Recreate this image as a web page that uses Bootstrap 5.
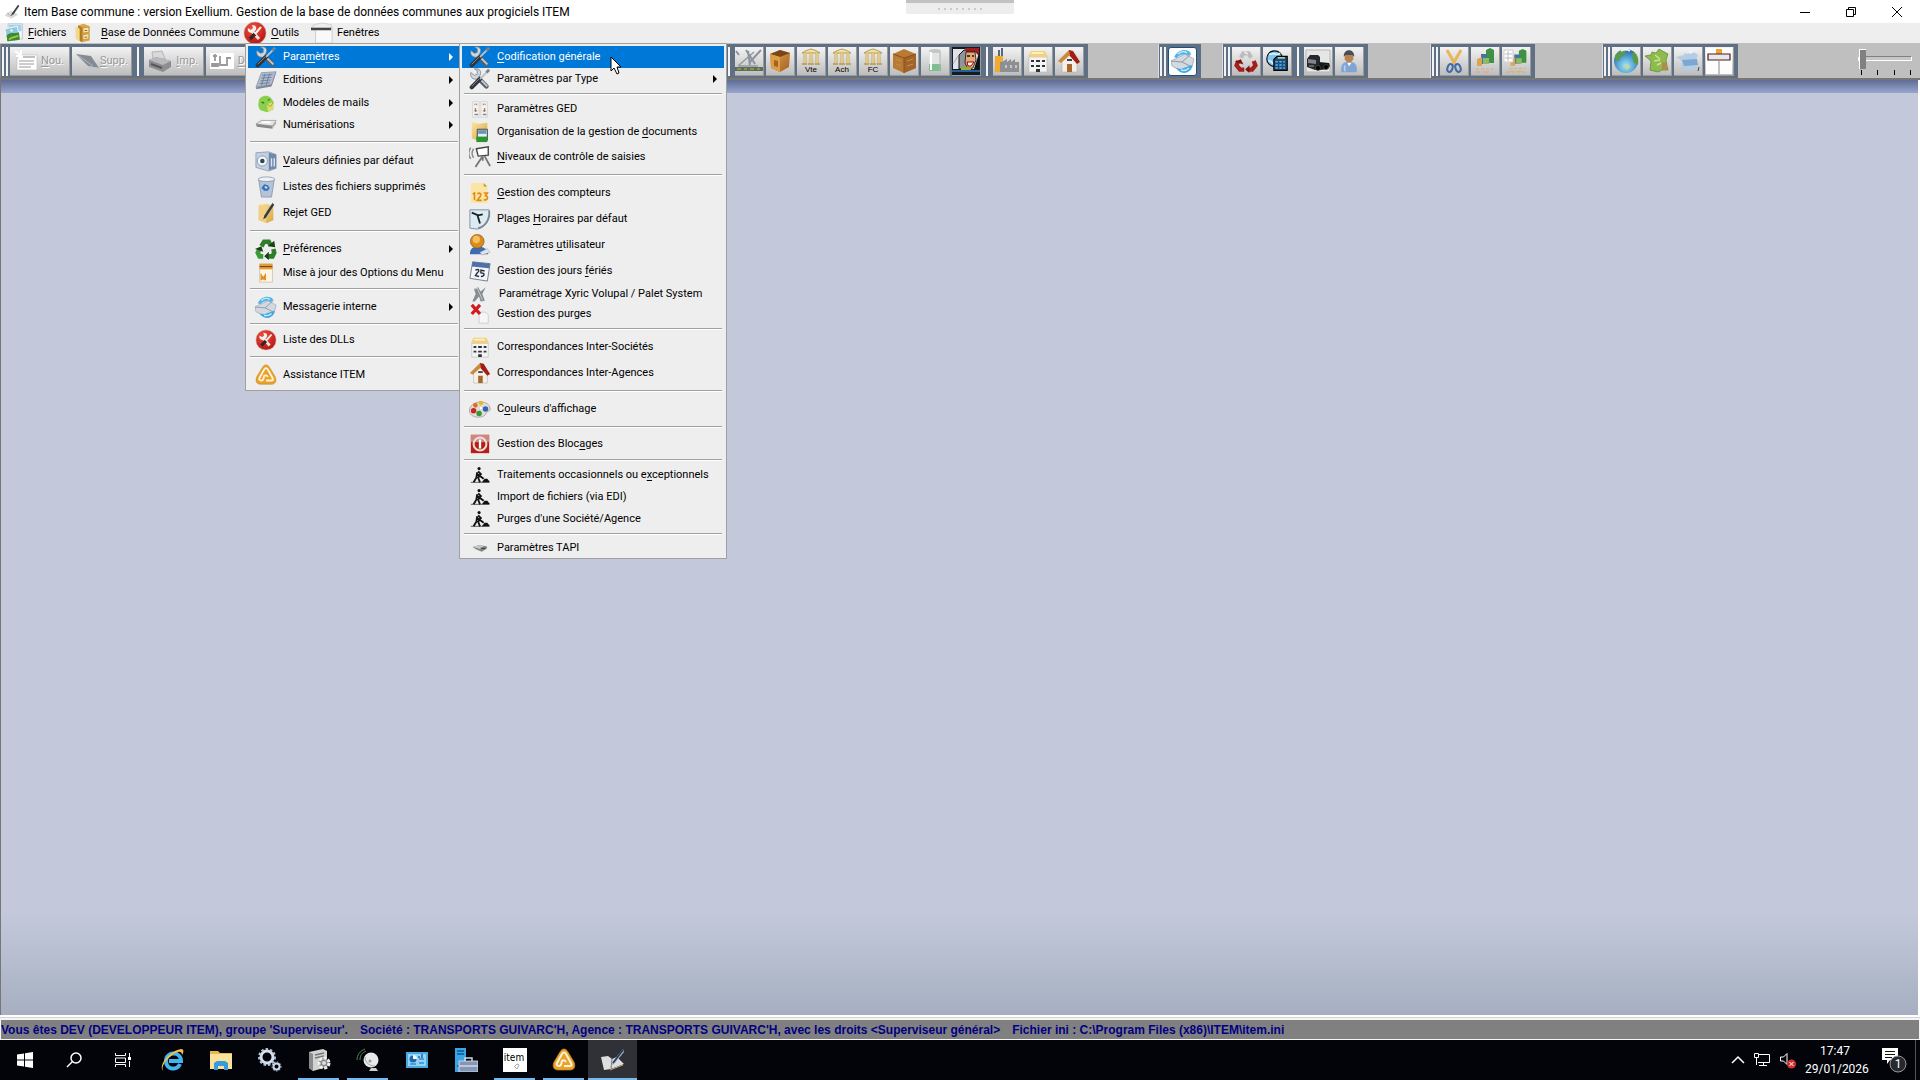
<!DOCTYPE html>
<html lang="fr">
<head>
<meta charset="utf-8">
<meta name="viewport" content="width=device-width, initial-scale=1">
<title>Item Base commune</title>
<link href="https://cdn.jsdelivr.net/npm/bootstrap@5.3.0/dist/css/bootstrap.min.css" rel="stylesheet">
<style>
  body { font-family: Roboto, "Noto Sans", sans-serif; font-size: 11px; line-height: 16px; color: #000; background: #fff; overflow: hidden; }
  svg { display: block; flex: none; }
  u { text-underline-offset: 2px; }
  .i16 { width: 16px; height: 16px; }
  .i20 { width: 20px; height: 20px; }
  .i22 { width: 22px; height: 22px; }
  .i24 { width: 24px; height: 24px; }
  .i28 { width: 28px; height: 28px; }

  .titlebar { height: 23px; }
  .titlebar h1 { font-size: 12px; line-height: 16px; font-weight: 400; }
  .win-btn { width: 46px; height: 20px; padding: 0; border: 0; background: none; display: flex; align-items: center; justify-content: center; }
  .pull-tab { position: absolute; left: 47.2%; top: 0; width: 108px; height: 14px; background: #ededed; border-top: 3px solid #c2c2c2; display: flex; justify-content: center; align-items: center; gap: 4px; }
  .pull-tab i { width: 2px; height: 2px; background: #ccc; }

  .menubar { height: 20px; background: #eee; }
  .menu-link { height: 20px; color: #000; text-decoration: none; display: flex; align-items: center; white-space: nowrap; }
  .menu-link:hover { color: #000; }
  .slot-files { width: 69px; }
  .slot-base { width: 174px; }
  .slot-tools { width: 64px; }

  .menu-pane { --bs-dropdown-min-width: 0; display: block; position: absolute; padding: 2px; border: 1px solid #a0a0a0; border-radius: 0; background: #eee; color: #000; font-size: 11px; margin: 0; z-index: 20; }
  .pane-main { top: 20px; left: 2px; width: 216px; padding-right: 0; }
  .pane-sub { top: -1px; left: 213px; width: 268px; padding-bottom: 0; }
  .menu-row { display: flex; align-items: center; width: 100%; height: 26px; padding: 0 7px 0 7px; border: 0; background: none; color: #000; text-align: left; white-space: nowrap; line-height: 16px; }
  .menu-row svg { margin-right: 6px; }
  .h-20 { height: 20px; }
  .h-22 { height: 22px; }
  .h-24 { height: 24px; }
  .picked, .picked:hover { background: #0078d7; color: #fff; }
  .has-sub::after { content: ""; margin-left: auto; border: 4px solid transparent; border-left-color: currentColor; border-right: 0; }
  .rule { height: 10px; display: flex; align-items: center; padding: 0 2px; }
  .rule::before { content: ""; flex: 1; height: 2px; background: #a0a0a0; border-bottom: 1px solid #fff; }
  .rule-12 { height: 12px; }
  .rule-8 { height: 8px; }

  .toolbar { height: 37px; background: #bfbfbf; border-bottom: 2px solid #777; padding-top: 1px; }
  .toolgroup { height: 34px; background: #5f7084; display: flex; align-items: center; gap: 2px; padding: 0 4px 0 1px; flex: none; border-left: 1px solid #dcdcdc; }
  .grip { width: 6px; height: 29px; border: solid #f4f4f4; border-width: 0 2px; flex: none; }
  .grip-one { width: 2px; height: 29px; background: #f4f4f4; margin: 0 3px; flex: none; }
  .tool { width: 29px; height: 29px; padding: 0; border: 0; border-right: 1px solid #9a9a9a; border-bottom: 1px solid #9a9a9a; background: linear-gradient(#f3f3f3, #bdbdbd); display: flex; align-items: center; justify-content: center; flex: none; }
  .tool-wide { width: 60px; padding: 0 5px 0 4px; justify-content: space-between; color: #989898; text-shadow: 1px 1px 0 #fff; font-size: 11px; }
  .tool-set { border: 1px solid #1d4f80; border-radius: 3px; background: #fdfdfd; }
  .group-long { width: 727px; border-left: 1px solid #888; }
  .group-tail { border-left: 0; }
  .gap-s { margin-left: 21px; }
  .gap-m { margin-left: 62px; }
  .gap-l { margin-left: 67px; }
  .gap-xl { margin-left: 70px; }

  .zoomer { width: 54px; padding-top: 4px; }
  .zoomer input { appearance: none; -webkit-appearance: none; display: block; width: 54px; height: 20px; margin: 0; background: none; }
  .zoomer input::-webkit-slider-runnable-track { height: 5px; background: #c6c6c6; border: 1px solid #fff; border-top-color: #808080; }
  .zoomer input::-webkit-slider-thumb { -webkit-appearance: none; width: 7px; height: 20px; margin-top: -8px; background: #808080; border-left: 1px solid #fff; border-top: 1px solid #fff; }
  .ticks { display: flex; justify-content: space-between; padding: 2px 1px 0 3px; }
  .ticks i { width: 1px; height: 5px; background: #000; }

  .workspace { border-left: 1px solid #777; border-right: 2px solid #fff; background: linear-gradient(#5f6b92, #98a6cd) top / 100% 13px no-repeat, linear-gradient(#c3c9da 89%, #a8b2c3 99%, #a9acc1); }
  .statusbar { margin-top: 2px; height: 23px; border-top: 1px solid #d4d4d4; background: #f4f4f4; padding: 2px 1px 1px; }
  .status-text { height: 19px; display: flex; gap: 12px; background: #808080; color: #000080; font: bold 12px/20px "Liberation Sans", Arial, sans-serif; white-space: nowrap; overflow: hidden; }

  .taskbar { height: 40px; background: #02040a; color: #fff; }
  .task { width: 49px; height: 40px; padding: 0; border: 0; background: none; display: flex; align-items: center; justify-content: center; position: relative; }
  .running::after { content: ""; position: absolute; left: 4px; right: 4px; bottom: 0; height: 2px; background: #76b9ed; }
  .focused { background: #303137; }
  .focused::after { left: 0; right: 0; }
  .tray { font-size: 12px; line-height: 18px; }
  .clock { width: 60px; }
  .tray-btn { padding: 0; border: 0; background: none; }
  .peek { width: 5px; height: 40px; border-left: 1px solid #555; }
  .pointer { position: absolute; left: 150px; top: 12px; z-index: 30; }
</style>
<script src="https://cdn.jsdelivr.net/npm/bootstrap@5.3.0/dist/js/bootstrap.bundle.min.js"></script>
</head>
<body class="vh-100 d-flex flex-column">

<svg width="0" height="0" class="position-absolute" aria-hidden="true">
  <defs>
    <linearGradient id="gFolder" x1="0" y1="0" x2="1" y2="1"><stop offset="0" stop-color="#fbe6a0"/><stop offset="1" stop-color="#d9a441"/></linearGradient>
    <radialGradient id="gRed" cx=".4" cy=".3" r=".8"><stop offset="0" stop-color="#f0503c"/><stop offset="1" stop-color="#b01010"/></radialGradient>
    <radialGradient id="gGlobe" cx=".5" cy=".7" r=".7"><stop offset="0" stop-color="#9be8fb"/><stop offset="1" stop-color="#1c62b0"/></radialGradient>
    <linearGradient id="gWood" x1="0" y1="0" x2="1" y2="1"><stop offset="0" stop-color="#e0a35a"/><stop offset="1" stop-color="#a3621d"/></linearGradient>

    <symbol id="tools" viewBox="0 0 24 24">
      <path d="M9 10l10 10" stroke="#5b6068" stroke-width="5" stroke-linecap="round"/>
      <path d="M8 8l12 12" stroke="#c3c9cf" stroke-width="2"/>
      <path d="M2 5l4 3 3-1 0-4-3-2c6-1 8 3 6 7l-3 4C4 13 1 10 2 5z" fill="#cfd6dd" stroke="#737b85" stroke-width=".8"/>
      <path d="M3 21l9-9" stroke="#30343a" stroke-width="4.500" stroke-linecap="round"/>
      <path d="M12 12l8-8" stroke="#b9c0c9" stroke-width="2"/><path d="M3 20l8-8" stroke="#878e98" stroke-width="1"/>
      <path d="M19 5l3-3" stroke="#7a828c" stroke-width="3"/>
    </symbol>
    <symbol id="redtools" viewBox="0 0 24 24"><circle cx="12" cy="12" r="11" fill="url(#gRed)" stroke="#d9a39c" stroke-width=".6"/><path d="M8 9l8 9" stroke="#e9e2df" stroke-width="3"/><path d="M5 7l3 2 2-2-1-3c5 0 5 4 3 6l-3 2c-3 0-5-2-4-5z" fill="#f2efec"/><path d="M7 18l5-5" stroke="#3c2220" stroke-width="3.500"/><path d="M12 13l6-7" stroke="#f7f2ee" stroke-width="2"/></symbol>
    <symbol id="photo" viewBox="0 0 24 24"><path d="M5 1h17v18H5z" fill="#f7fbff" stroke="#9aa" stroke-width=".7"/><path d="M6 2h15v8H6z" fill="#9fd3f0"/><path d="M1 7l15-3 3 17-15 2z" fill="#8cc8e8" stroke="#fff"/><path d="M3 15c5-5 9-2 15-4l1 9-15 2z" fill="#3f8a2a"/><path d="M6 20c4-4 7-2 11-5" stroke="#9bcf4a" stroke-width="2" fill="none"/><circle cx="9" cy="9" r="1.500" fill="#fff7b0"/></symbol>
    <symbol id="cabinet" viewBox="0 0 24 24"><path d="M6 3l7-2 7 3v17l-9 2-5-3z" fill="#d7a94f"/><path d="M6 3l5 2v18l-5-3z" fill="#b27c25"/><path d="M12 6l7-1v6l-7 1zM12 14l7-1v6l-7 1z" fill="#fae3a5" stroke="#a6761f" stroke-width=".6"/><path d="M14 9h3M14 17h3" stroke="#7a4d0c"/><path d="M3 4l5 3v15l-5-3z" fill="#f5d88c"/></symbol>
    <symbol id="window" viewBox="0 0 24 24"><path d="M2 6h21v17H5V10z" fill="#f9f9f9" stroke="#c9c9c9"/><path d="M0 6h22v3H0z" fill="#444"/><path d="M3 3l9-2 10 2v3H1z" fill="#eee" stroke="#bbb" stroke-width=".6"/></symbol>
    <symbol id="pen" viewBox="0 0 24 24"><path d="M2 17l8-6 10 5-9 5z" fill="#dfe0e2" stroke="#aaa" stroke-width=".6"/><path d="M21 1l2 2-9 13-4 2 2-4z" fill="#3a3f48"/><path d="M5 13l3 4M9 18l5-3" stroke="#888"/></symbol>
    <symbol id="sheet" viewBox="0 0 24 24"><path d="M7 6l16-2-5 15-17 3z" fill="#7e8898"/><path d="M7 4l16-1-5 14-17 3z" fill="#b0bccd" stroke="#78869a" stroke-width=".7"/><path d="M8 7l11-1M7 10l11-1M6 13l11-1M5 16l11-1M11 5l-4 13M16 5l-4 13" stroke="#667a99" stroke-width=".9"/></symbol>
    <symbol id="greenmail" viewBox="0 0 24 24"><path d="M4 11c0-6 8-9 13-5l3 4v9l-7 3-7-2c-2-2-3-5-2-9z" fill="#8bd04a"/><path d="M13 13l7-2v8l-6 2z" fill="#e0dd70"/><path d="M13 13l4 3 3-5" stroke="#9aa638" fill="none"/><path d="M7 11l3 1M14 9l2-1" stroke="#3f7b1c" stroke-width="1.500"/></symbol>
    <symbol id="scanner" viewBox="0 0 24 24"><path d="M1 11l6-4h16l-4 6z" fill="#e6e6e6" stroke="#888" stroke-width=".7"/><path d="M1 11l18 2v3L2 14z" fill="#888"/><path d="M19 13l4-5v2l-4 6z" fill="#aaa"/><path d="M8 9h9" stroke="#fff" stroke-width="2"/></symbol>
    <symbol id="camera" viewBox="0 0 24 24"><path d="M1 3l14-1 8 3v15l-8 3-14-4z" fill="#c3d0e1" stroke="#8494a9" stroke-width=".8"/><path d="M15 3l8 2v15l-8 2z" fill="#7088aa"/><circle cx="8" cy="12" r="5.500" fill="#f4f7fa" stroke="#8a98ab"/><circle cx="8" cy="12" r="2.500" fill="#33435c"/><path d="M18 9v9M21 9v9" stroke="#dce6f2" stroke-width="1.500"/></symbol>
    <symbol id="bin" viewBox="0 0 24 24"><path d="M4 4h17l-3 19H7z" fill="#b5c3d8" stroke="#7f8da3" stroke-width=".8"/><ellipse cx="12.500" cy="3.500" rx="9" ry="2.500" fill="#eef2f7" stroke="#7f8da3" stroke-width=".8"/><path d="M7 13l3-4 4 1 2 3-2 3h-4z" fill="#2f73bd"/><path d="M10 12l2-1 2 2-2 1z" fill="#d6e4f3"/></symbol>
    <symbol id="foldpen" viewBox="0 0 24 24"><path d="M4 3l9-1 7 3v15l-7 3-9-3z" fill="url(#gFolder)"/><path d="M4 3l8 3v17l-8-3z" fill="#f2d083"/><path d="M19 1l2 2-9 14-3 2 1-4z" fill="#333b46"/></symbol>
    <symbol id="recycle" viewBox="0 0 24 24"><g fill="none" stroke-width="5"><path d="M7 9l3-5h5l2 4" stroke="#2f7d2b"/><path d="M20 12l1 4-2 4h-5" stroke="#2f7d2b"/><path d="M9 20H5l-2-4 2-4" stroke="#3b9a34"/></g><path d="M14 9l8 1-1-7zM15 15v9l-5-4zM0 12l7-3 2 6z" fill="#1b3f18"/></symbol>
    <symbol id="memo" viewBox="0 0 24 24"><path d="M5 2h14v20H5z" fill="#fdf6e6" stroke="#c9b48b" stroke-width=".7"/><path d="M5 2h14v6H5z" fill="#e79b34"/><path d="M5 5h14" stroke="#5f3a10"/><path d="M7 20v-5l2 3 2-3v5" stroke="#e0901c" stroke-width="2" fill="none"/></symbol>
    <symbol id="envelope" viewBox="0 0 24 24"><path d="M3 8C7 0 16-1 20 4l-3 3C13 4 8 6 6 9z" fill="#4bb6ea"/><path d="M0 12L14 5l9 5-2 8-11 4-9-5z" fill="#d3d9df" stroke="#93a0ad" stroke-width=".7"/><path d="M0 12l11 1 9-8M11 13l10 5" stroke="#8d99a6" fill="none"/><path d="M5 19l5 1 11-4c1 4-3 7-7 8-4 0-7-2-9-5z" fill="#42a8e0"/><path d="M7 5c3-3 7-3 9-1M10 21c3 1 6 0 8-2" stroke="#c6ecfb" stroke-width="1.500" fill="none"/></symbol>
    <symbol id="assist" viewBox="0 0 24 24"><path d="M8 4c2-4 6-4 8 0l6 10c2 5 0 8-4 8H6c-4 0-6-3-4-8z" fill="#e9a32a" stroke="#c8841a" stroke-width=".7"/><path d="M12 18h6c2 0 2-1 1-3l-5-9c-1-2-3-2-4 0L5 15c-1 2 0 3 2 3 3 0 2-3 3-5 1-1 3-1 4 1" stroke="#fff3d8" stroke-width="2" fill="none"/></symbol>
    <symbol id="ged" viewBox="0 0 24 24"><path d="M4 4h7v17H4zM13 4h7v17h-7z" fill="#f7f5f2" stroke="#cac6c0" stroke-width=".7"/><path d="M6 7h1m1 0h1M15 7h1m1 0h1" stroke="#777" stroke-width="2"/><path d="M6 18h4M15 18h4M7 11v4M17 11v4" stroke="#888" stroke-width="1.500"/><path d="M6 14h3M15 14h3" stroke="#b2533a"/></symbol>
    <symbol id="foldphoto" viewBox="0 0 24 24"><path d="M3 1l8 2 9-1v19H10l-7-2z" fill="url(#gFolder)"/><path d="M9 9h11v12H9z" fill="#dff0fa" stroke="#334" stroke-width="1"/><path d="M8 17h12v6H8z" fill="#2d9430"/><path d="M10 10h9v4h-9z" fill="#6a95b0"/></symbol>
    <symbol id="level" viewBox="0 0 24 24"><path d="M2 2c-3 3-3 9 0 12M5 3c-2 3-2 7 0 10" stroke="#888" fill="none" stroke-width="1.500"/><path d="M8 3l13-2v9l-11 1z" fill="#fff" stroke="#444" stroke-width="1.500"/><path d="M15 11l-8 12M17 11l6 11M15 12v4" stroke="#777" stroke-width="2"/></symbol>
    <symbol id="counter" viewBox="0 0 24 24"><path d="M2 1h14l4 4v18H2z" fill="#fbe5a4"/><path d="M16 1l4 4h-4z" fill="#c99a3c"/><g fill="none" stroke="#e08c18" stroke-width="1.800"><path d="M4 13l2-1v8"/><path d="M9 13c3-2 5 0 3 3l-3 4h5"/><path d="M16 12h4l-2 3c4 1 2 6-2 4"/></g></symbol>
    <symbol id="clock" viewBox="0 0 24 24"><path d="M1 2h21c2 10-4 20-13 21L1 22z" fill="#dcebf2" stroke="#7f8c96"/><path d="M22 3c1 9-4 17-12 19" stroke="#7b8892" stroke-width="2" fill="none"/><path d="M3 5l7 3 5-1M9 7l3 10" stroke="#16202c" stroke-width="2" fill="none"/></symbol>
    <symbol id="user" viewBox="0 0 24 24"><path d="M1 22c0-7 4-8 9-8s10 2 11 8z" fill="#3b6cb4"/><circle cx="9" cy="8" r="7.500" fill="#d98b1f" stroke="#8a5312" stroke-width=".7"/><circle cx="8" cy="6" r="4" fill="#f5bf5c"/><path d="M12 20l8-4 3 4-9 3z" fill="#dfe4ea" stroke="#99a" stroke-width=".5"/></symbol>
    <symbol id="calendar" viewBox="0 0 24 24"><path d="M4 2l19 2-3 19-19-3z" fill="#f4f6f9" stroke="#6a7a90"/><path d="M4 2l19 2-1 5L3 7z" fill="#4d70aa"/><path d="M7 11c4-2 5 1 2 3l-2 3 4 1M17 12l-4-1v3c5 0 4 4 0 4" stroke="#26303d" stroke-width="1.500" fill="none"/></symbol>
    <symbol id="xyric" viewBox="0 0 24 24"><path d="M6 6l5-2 3 5 6-5-4 8 3 8-5 1-2-6-5 6H4l4-9z" fill="#878c92"/><path d="M7 6l3-1 6 14" stroke="#d2d5d8" fill="none"/></symbol>
    <symbol id="purge" viewBox="0 0 24 24"><path d="M11 10h7l3 3v9H11z" fill="#f6f6f6" stroke="#c6c6c6" stroke-width=".8"/><path d="M3 2l9 10M12 2L3 12" stroke="#cf1c1c" stroke-width="3.500"/></symbol>
    <symbol id="building" viewBox="0 0 24 24"><path d="M3 8h18v15H3z" fill="#f4f4f4" stroke="#bbb" stroke-width=".7"/><path d="M5 2h14l3 6H2z" fill="#f4cf7c"/><path d="M6 3h11l1 2H5z" fill="#fdf0c4"/><path d="M5 11h3v2H5zM10 11h4v2h-4zM16 11h3v2h-3zM5 16h3v2H5zM10 16h4v2h-4zM16 16h3v2h-3zM10 20h4v3h-4z" fill="#2f343b"/></symbol>
    <symbol id="house" viewBox="0 0 24 24"><path d="M5 11l7-7 8 7v12H5z" fill="#f3f0ea" stroke="#b7b0a4" stroke-width=".6"/><path d="M12 1l4 1 7 11-3 2-8-9z" fill="#a31c16"/><path d="M12 1L1 12l3 2 9-8z" fill="#c98a3c"/><path d="M10 15h5v8h-5z" fill="#a8672a"/><path d="M10 11h5" stroke="#444" stroke-width="2"/></symbol>
    <symbol id="palette" viewBox="0 0 24 24"><path d="M2 9c5-7 20-6 21 2 1 4-3 3-4 5-1 3-4 5-9 5C2 21-2 15 2 9z" fill="#e3ded5" stroke="#9d958a" stroke-width=".8"/><circle cx="7" cy="8" r="2.500" fill="#d9701f"/><circle cx="13" cy="5.500" r="2.500" fill="#e5b92c"/><circle cx="18" cy="12" r="3" fill="#2d62bd"/><circle cx="5" cy="14" r="3" fill="#c6262a"/><circle cx="11" cy="17" r="3" fill="#38973b"/><circle cx="13" cy="11" r="2" fill="#fff" stroke="#aaa" stroke-width=".5"/></symbol>
    <symbol id="block" viewBox="0 0 24 24"><path d="M2 2h20v20H2z" fill="#b3201a"/><path d="M2 2h20v8H2z" fill="#cf867e"/><circle cx="12" cy="12" r="7" fill="none" stroke="#f2dcd8" stroke-width="2.200"/><path d="M12 7v10" stroke="#fff" stroke-width="2.500"/></symbol>
    <symbol id="works" viewBox="0 0 24 24"><path d="M2 20h20" stroke="#555"/><circle cx="11" cy="5" r="1.700" fill="#111"/><path d="M10 8l3 3-3 4 2 5M9 9l-1 6-3 5M8 10l8 6" stroke="#111" stroke-width="2" fill="none"/><path d="M14 20l3-4h3l3 4z" fill="#111"/></symbol>
    <symbol id="tapi" viewBox="0 0 24 24"><path d="M4 11l7-2 8 1 1 2-6 4-7-3z" fill="#7e8388"/><path d="M4 11l7-2 5 1-4 3z" fill="#c4c7ca"/><path d="M13 12l5 1" stroke="#333"/></symbol>

    <symbol id="newdoc" viewBox="0 0 24 24"><path d="M6 6h17v15H3V10z" fill="#fff" stroke="#bdbdbd" stroke-width=".6"/><path d="M5 12h15M5 15h15M5 18h12" stroke="#9a9a9a"/><path d="M1 2l7 5M2 7h6M7 1v7" stroke="#fff" stroke-width="2"/><path d="M9 8h12" stroke="#c0c0c0" stroke-width="2"/></symbol>
    <symbol id="eraser" viewBox="0 0 24 24"><path d="M0 5l15 2 8 12-11-2z" fill="#858b93"/><path d="M12 17l11 2-1 3-9-1z" fill="#c2c6cb"/><path d="M3 7l14 10" stroke="#b0b5bb"/></symbol>
    <symbol id="printer" viewBox="0 0 24 24"><path d="M4 3l10-1 3 8H5z" fill="#d9d9db" stroke="#999" stroke-width=".6"/><path d="M1 11l7-3 15 4v6l-8 5-14-5z" fill="#8c8c91"/><path d="M1 11l7-3 15 4-8 4z" fill="#b8b8bd"/><path d="M3 15l11 4" stroke="#55555a" stroke-width="2"/></symbol>
    <symbol id="dup" viewBox="0 0 24 24"><path d="M0 4h24v16H0z" fill="#fff"/><path d="M5 5v7M3 7h4M2 15h6v2H2zM10 7v9h7v-7h4" fill="none" stroke="#999" stroke-width="1.800"/></symbol>

    <symbol id="drafting" viewBox="0 0 28 28"><path d="M0 20h28v4H0z" fill="#666"/><path d="M2 22h4M9 22h3M15 22h4M22 22h3" stroke="#72a33b" stroke-width="2"/><path d="M3 19L19 5M4 19h19" stroke="#969aa0" stroke-width="1.500"/><path d="M26 3L14 16M11 3l9 14M13 4l2 14M1 4l3 4" stroke="#8a93a2" stroke-width="2"/></symbol>
    <symbol id="openbox" viewBox="0 0 28 28"><path d="M4 7l10-4 10 3-1 14-9 5-9-4z" fill="url(#gWood)"/><path d="M4 7l10-4 10 3-10 4z" fill="#7d4514"/><path d="M4 7l10 3v15l-9-4z" fill="#dc9d45"/><path d="M8 13l4 1v6l-4-1z" fill="#a36420"/></symbol>
    <symbol id="temple" viewBox="0 0 28 28"><path d="M5 6c3-2 5-3 9-4 4 1 6 2 9 4z" fill="#f0e0a8" stroke="#b49a55"/><path d="M8 6v12M14 6v12M20 6v12" stroke="#c9a95b" stroke-width="3"/><path d="M8 6v12M14 6v12M20 6v12" stroke="#f7e9bd"/><path d="M5 17h5M11 17h6M18 17h5" stroke="#b49a55" stroke-width="1.500"/></symbol>
    <symbol id="crate" viewBox="0 0 28 28"><path d="M3 7l11-5 12 5v14l-12 5-11-5z" fill="#b77b35"/><path d="M14 11l12-4v14l-12 5z" fill="#a0642a"/><path d="M3 7l11 4 12-4M14 11v15" stroke="#8a5119" fill="none"/><path d="M6 12l5 2M6 17l5 2M17 14l6-2M17 19l6-2" stroke="#c98e48" fill="none"/></symbol>
    <symbol id="tank" viewBox="0 0 28 28"><path d="M8 4h12v20H8z" fill="#e0e5e3"/><path d="M8 17h12v7H8z" fill="#7cc08f"/><ellipse cx="14" cy="4" rx="6" ry="2" fill="#c2c6c6"/><path d="M10 5v18" stroke="#fff" stroke-width="2"/><path d="M19 5v18" stroke="#a9b1ae"/></symbol>
    <symbol id="cashier" viewBox="0 0 28 28"><path d="M0 0h28v28H0z" fill="#171a20"/><path d="M1 2h26v20H1z" fill="#dfe3e6"/><path d="M7 22V8l5-5h5v19z" fill="#8f959c" stroke="#111"/><path d="M13 1h14v8l-4-4h-9z" fill="#9b1d1d"/><path d="M27 6v16h-5z" fill="#111"/><path d="M14 5l9 0 1 8-3 8-5 1-3-6z" fill="#e4a979" stroke="#111" stroke-width=".8"/><path d="M15 9h3M20 9h2" stroke="#111" stroke-width="1.500"/><path d="M15 15h7l-3 4h-3z" fill="#fff" stroke="#a00"/><path d="M9 20h10v3H9z" fill="#9aad2d"/><path d="M0 23h28v2H0z" fill="#2360a0"/><path d="M1 17l5-8" stroke="#aaa"/></symbol>
    <symbol id="factory" viewBox="0 0 28 28"><path d="M2 25V9h8v16z" fill="#f0aa32"/><path d="M5 3h2v6H5zM8 1h2v8H8z" fill="#5b6a80"/><path d="M7 25V15h2l5-3v3l4-3v3l4-3v3h4v10z" fill="#8d8f93"/><path d="M12 18h2v3h-2zM17 18h2v3h-2zM22 18h2v3h-2z" fill="#c4c6c9"/></symbol>
    <symbol id="redcycle" viewBox="0 0 28 28"><g fill="none" stroke-width="5"><path d="M8 10l3-5h6l3 5" stroke="#bdbdbd"/><path d="M23 14l2 5-4 5h-5" stroke="#a31f1c"/><path d="M12 24H7l-4-5 2-5" stroke="#a31f1c"/></g><path d="M1 15l7-3 3 6zM18 19v9l-5-4z" fill="#7d1210"/><path d="M12 3l4 3" stroke="#eee" stroke-width="2"/></symbol>
    <symbol id="netcalc" viewBox="0 0 28 28"><circle cx="11" cy="11" r="10" fill="#7ec8ee" stroke="#012" stroke-width="1.500"/><path d="M4 6c6-4 9 2 14-2M3 13c5 1 5 6 10 6" stroke="#eef" stroke-width="2" fill="none"/><path d="M10 12l4-4h13v18H10z" fill="#1d4f7e" stroke="#000" stroke-width="1.500"/><path d="M12 15h3M17 15h3M22 15h2M12 19h3M17 19h3M22 19h2M12 23h3M17 23h3M22 23h2" stroke="#63b5dd" stroke-width="2"/><path d="M15 10h9" stroke="#b9dd8d" stroke-width="2"/></symbol>
    <symbol id="truck" viewBox="0 0 28 28"><path d="M2 3h24v22H2z" fill="#e6e6e6" stroke="#b7b7b7"/><path d="M3 12l3-4 8 0 2 2v12l-5 1-8-3z" fill="#26282c"/><path d="M4 12l8 1v4l-8-1z" fill="#7e858d"/><path d="M15 15l10 1 1 3-2 3-8 1z" fill="#16181b"/><path d="M5 19h5" stroke="#999"/><circle cx="14" cy="21" r="2.500" fill="#000" stroke="#555" stroke-width=".6"/><circle cx="22" cy="20" r="2.500" fill="#000" stroke="#555" stroke-width=".6"/></symbol>
    <symbol id="person" viewBox="0 0 28 28"><path d="M5 27c-1-10 3-12 9-12s10 2 9 12z" fill="#7fa5d6"/><path d="M9 6h10v6l-3 4h-4l-3-4z" fill="#b9834f"/><path d="M8 9c-1-10 13-10 12 0l-2-2h-8z" fill="#4a4e55"/><path d="M12 16l2 4 3-4" fill="#fff"/><path d="M9 19v7" stroke="#b7cdec" stroke-width="2"/></symbol>
    <symbol id="scissors" viewBox="0 0 28 28"><path d="M7 3l8 14M21 3l-8 14" stroke="#e8b55b" stroke-width="3"/><ellipse cx="10" cy="21" rx="2.500" ry="4" transform="rotate(20 10 21)" fill="none" stroke="#3f6ca5" stroke-width="2"/><ellipse cx="18" cy="21" rx="2.500" ry="4" transform="rotate(-20 18 21)" fill="none" stroke="#3f6ca5" stroke-width="2"/></symbol>
    <symbol id="bars" viewBox="0 0 28 28"><path d="M15 3l4-2 4 2v13h-8z" fill="#3e9145"/><path d="M10 7h6v10h-6z" fill="#3f789c"/><path d="M6 12l5-2v9H6z" fill="#dda252"/><path d="M12 11h6v6h-6z" fill="#8cba65"/><path d="M5 22h3M10 22h3M15 22h3M20 22h2M5 25h4M12 25h6" stroke="#e3a878"/></symbol>
    <symbol id="barsheet" viewBox="0 0 28 28"><use href="#bars" x="3" width="26" height="28"/><path d="M2 3h9v12H2z" fill="#fff" stroke="#ccc"/><path d="M3 7h7M3 11h7M6 4v10" stroke="#bbb"/><path d="M5 25h18" stroke="#c8c048" stroke-dasharray="3 2"/></symbol>
    <symbol id="globe" viewBox="0 0 28 28"><circle cx="14" cy="14" r="12" fill="url(#gGlobe)"/><path d="M3 9c3-5 8-7 12-6l-3 5-4 3-1 3-4-1zM21 4c5 4 6 9 5 14l-4-2-2-6z" fill="#5a9a4b"/><path d="M12 19l4-2 2 3-3 3z" fill="#cdd692"/><path d="M9 4c3-2 6-2 9 0" stroke="#f2f8fb" stroke-width="2" fill="none"/></symbol>
    <symbol id="france" viewBox="0 0 28 28"><path d="M2 9l6-1 1-3 4 1 3-4 9 5-2 6 1 6 1 4-6 0-4 2-8-2 1-9z" fill="#8dbb4f" stroke="#5c842f" stroke-width=".7"/><path d="M19 15l4 1 1 7-5-1z" fill="#b8874c"/><path d="M12 8l5 4M11 14l6-1M14 18l4-2" stroke="#cfe08f" stroke-width="1.500"/></symbol>
    <symbol id="francelite" viewBox="0 0 28 28"><path d="M2 10l8-2 1-2 3 1 3-4 7 5-2 5 1 8-8 3-7-2 0-8z" fill="#b4cce4"/><path d="M8 13l15-1 1 6-14 1z" fill="#7ba8d2"/><path d="M13 4l4-2 4 3-5 2z" fill="#eaf2f8"/><path d="M25 20l-1 4" stroke="#345"/></symbol>
    <symbol id="signpost" viewBox="0 0 28 28"><path d="M1 1h26v26H1z" fill="#fdfdfd"/><path d="M11 2h6v5h-6z" fill="#eda52f"/><path d="M3 7h22v6H3z" fill="#e8e8e8" stroke="#4c1a1f" stroke-width="1.200"/><path d="M13 14h2v13h-2z" fill="#c2c2c2"/></symbol>
  </defs>
</svg>

<header class="titlebar d-flex align-items-center ps-1">
  <svg class="i16"><use href="#pen"/></svg>
  <h1 class="m-0 ms-1">Item Base commune : version Exellium. Gestion de la base de données communes aux progiciels ITEM</h1>
  <div class="pull-tab"><i></i><i></i><i></i><i></i><i></i><i></i><i></i><i></i></div>
  <div class="ms-auto d-flex">
    <button class="win-btn" aria-label="Réduire"><svg width="12" height="12"><path d="M1 6.500h10" stroke="#000"/></svg></button>
    <button class="win-btn" aria-label="Restaurer"><svg width="12" height="12"><path d="M1.500 3.500h7v7h-7zM3.500 3V1.500h7v7H9" fill="none" stroke="#000"/></svg></button>
    <button class="win-btn" aria-label="Fermer"><svg width="12" height="12"><path d="M1 1l10 10M11 1L1 11" stroke="#000"/></svg></button>
  </div>
</header>

<nav class="menubar">
  <ul class="list-unstyled d-flex m-0">
    <li class="slot-files"><a class="menu-link ps-1" href="#"><svg class="i20 me-1"><use href="#photo"/></svg><span><u>F</u>ichiers</span></a></li>
    <li class="slot-base"><a class="menu-link ps-1" href="#"><svg class="i20 me-2"><use href="#cabinet"/></svg><span><u>B</u>ase de Données Commune</span></a></li>
    <li class="slot-tools position-relative"><a class="menu-link" href="#" aria-expanded="true"><svg class="i24 me-1"><use href="#redtools"/></svg><span><u>O</u>utils</span></a>
      <div class="dropdown-menu menu-pane pane-main">
        <button class="menu-row h-22 picked has-sub"><svg class="i22"><use href="#tools"/></svg><span>Para<u>m</u>ètres</span></button>
        <button class="menu-row h-24 has-sub"><svg class="i22"><use href="#sheet"/></svg>Editions</button>
        <button class="menu-row h-22 has-sub"><svg class="i22"><use href="#greenmail"/></svg>Modèles de mails</button>
        <button class="menu-row h-22 has-sub"><svg class="i22"><use href="#scanner"/></svg>Numérisations</button>
        <div class="rule rule-12"></div>
        <button class="menu-row"><svg class="i22"><use href="#camera"/></svg><span><u>V</u>aleurs définies par défaut</span></button>
        <button class="menu-row"><svg class="i22"><use href="#bin"/></svg>Listes des fichiers supprimés</button>
        <button class="menu-row"><svg class="i22"><use href="#foldpen"/></svg>Rejet GED</button>
        <div class="rule"></div>
        <button class="menu-row has-sub"><svg class="i22"><use href="#recycle"/></svg><span><u>P</u>références</span></button>
        <button class="menu-row h-22"><svg class="i22"><use href="#memo"/></svg>Mise à jour des Options du Menu</button>
        <div class="rule"></div>
        <button class="menu-row has-sub"><svg class="i22"><use href="#envelope"/></svg>Messagerie interne</button>
        <div class="rule rule-8"></div>
        <button class="menu-row h-24"><svg class="i22"><use href="#redtools"/></svg>Liste des DLLs</button>
        <div class="rule"></div>
        <button class="menu-row"><svg class="i22"><use href="#assist"/></svg>Assistance ITEM</button>

        <div class="dropdown-menu menu-pane pane-sub">
          <button class="menu-row h-22 picked"><svg class="i22"><use href="#tools"/></svg><span><u>C</u>odification générale</span></button>
          <button class="menu-row h-22 has-sub"><svg class="i22"><use href="#tools"/></svg>Paramètres par Type</button>
          <div class="rule rule-8"></div>
          <button class="menu-row h-22"><svg class="i22"><use href="#ged"/></svg>Paramètres GED</button>
          <button class="menu-row h-24"><svg class="i22"><use href="#foldphoto"/></svg><span>Organisation de la gestion de <u>d</u>ocuments</span></button>
          <button class="menu-row"><svg class="i22"><use href="#level"/></svg><span><u>N</u>iveaux de contrôle de saisies</span></button>
          <div class="rule"></div>
          <button class="menu-row"><svg class="i22"><use href="#counter"/></svg><span><u>G</u>estion des compteurs</span></button>
          <button class="menu-row"><svg class="i22"><use href="#clock"/></svg><span>Plages <u>H</u>oraires par défaut</span></button>
          <button class="menu-row"><svg class="i22"><use href="#user"/></svg><span>Paramètres <u>u</u>tilisateur</span></button>
          <button class="menu-row"><svg class="i22"><use href="#calendar"/></svg><span>Gestion des jours <u>f</u>ériés</span></button>
          <button class="menu-row h-20"><svg class="i20"><use href="#xyric"/></svg><span class="ps-1">Paramétrage Xyric Volupal / Palet System</span></button>
          <button class="menu-row h-20"><svg class="i22"><use href="#purge"/></svg>Gestion des purges</button>
          <div class="rule"></div>
          <button class="menu-row"><svg class="i22"><use href="#building"/></svg>Correspondances Inter-Sociétés</button>
          <button class="menu-row"><svg class="i22"><use href="#house"/></svg>Correspondances Inter-Agences</button>
          <div class="rule"></div>
          <button class="menu-row"><svg class="i22"><use href="#palette"/></svg><span>C<u>o</u>uleurs d'affichage</span></button>
          <div class="rule"></div>
          <button class="menu-row h-24"><svg class="i22"><use href="#block"/></svg><span>Gestion des Bloc<u>a</u>ges</span></button>
          <div class="rule rule-8"></div>
          <button class="menu-row h-22"><svg class="i22"><use href="#works"/></svg><span>Traitements occasionnels ou e<u>x</u>ceptionnels</span></button>
          <button class="menu-row h-22"><svg class="i22"><use href="#works"/></svg>Import de fichiers (via EDI)</button>
          <button class="menu-row h-22"><svg class="i22"><use href="#works"/></svg>Purges d'une Société/Agence</button>
          <div class="rule rule-8"></div>
          <button class="menu-row h-20"><svg class="i22"><use href="#tapi"/></svg>Paramètres TAPI</button>
          <svg class="pointer" width="13" height="20" viewBox="0 0 13 20"><path d="M1 1v14l3-3 3 6 2-1-2-6h4z" fill="#fff" stroke="#000"/></svg>
        </div>
      </div>
    </li>
    <li><a class="menu-link ps-1" href="#"><svg class="i22 me-1"><use href="#window"/></svg><span>Fenêtres</span></a></li>
  </ul>
</nav>

<div class="toolbar d-flex" role="toolbar">
  <div class="toolgroup group-long">
    <span class="grip"></span>
    <button class="tool tool-wide" disabled><svg class="i24"><use href="#newdoc"/></svg><span><u>N</u>ou.</span></button>
    <button class="tool tool-wide" disabled><svg class="i24"><use href="#eraser"/></svg><span><u>S</u>upp.</span></button>
    <span class="grip-one"></span>
    <button class="tool tool-wide" disabled><svg class="i24"><use href="#printer"/></svg><span><u>I</u>mp.</span></button>
    <button class="tool tool-wide" disabled><svg class="i24"><use href="#dup"/></svg><span><u>D</u>up.</span></button>
  </div>
  <div class="toolgroup group-tail">
    <span class="grip-one ms-0"></span>
    <button class="tool" aria-label="Plan"><svg class="i28"><use href="#drafting"/></svg></button>
    <button class="tool" aria-label="Carton"><svg class="i28"><use href="#openbox"/></svg></button>
    <button class="tool" aria-label="Ventes"><svg class="i28" viewBox="0 0 28 28"><use href="#temple" width="28" height="28"/><text x="14" y="25" font-size="8" text-anchor="middle" font-family="Liberation Sans">Vte</text></svg></button>
    <button class="tool" aria-label="Achats"><svg class="i28" viewBox="0 0 28 28"><use href="#temple" width="28" height="28"/><text x="14" y="25" font-size="8" text-anchor="middle" font-family="Liberation Sans">Ach</text></svg></button>
    <button class="tool" aria-label="FC"><svg class="i28" viewBox="0 0 28 28"><use href="#temple" width="28" height="28"/><text x="14" y="25" font-size="8" text-anchor="middle" font-family="Liberation Sans">FC</text></svg></button>
    <button class="tool" aria-label="Caisse"><svg class="i28"><use href="#crate"/></svg></button>
    <button class="tool" aria-label="Cuve"><svg class="i28"><use href="#tank"/></svg></button>
    <button class="tool" aria-label="Guichet"><svg class="i28"><use href="#cashier"/></svg></button>
    <span class="grip-one"></span>
    <button class="tool" aria-label="Usine"><svg class="i28"><use href="#factory"/></svg></button>
    <button class="tool" aria-label="Sociétés"><svg class="i24"><use href="#building"/></svg></button>
    <button class="tool" aria-label="Agences"><svg class="i24"><use href="#house"/></svg></button>
  </div>
  <div class="toolgroup gap-xl">
    <span class="grip"></span>
    <button class="tool tool-set" aria-label="Messagerie"><svg class="i24"><use href="#envelope"/></svg></button>
  </div>
  <div class="toolgroup gap-s">
    <span class="grip"></span>
    <button class="tool" aria-label="Recyclage"><svg class="i24"><use href="#redcycle"/></svg></button>
    <button class="tool" aria-label="Calcul"><svg class="i22"><use href="#netcalc"/></svg></button>
    <span class="grip-one"></span>
    <button class="tool" aria-label="Véhicules"><svg class="i28"><use href="#truck"/></svg></button>
    <button class="tool" aria-label="Personnel"><svg class="i24"><use href="#person"/></svg></button>
  </div>
  <div class="toolgroup gap-m">
    <span class="grip"></span>
    <button class="tool" aria-label="Couper"><svg class="i28"><use href="#scissors"/></svg></button>
    <button class="tool" aria-label="Statistiques"><svg class="i28"><use href="#bars"/></svg></button>
    <button class="tool" aria-label="Tableau"><svg class="i28"><use href="#barsheet"/></svg></button>
  </div>
  <div class="toolgroup gap-l">
    <span class="grip"></span>
    <button class="tool" aria-label="Monde"><svg class="i28"><use href="#globe"/></svg></button>
    <button class="tool" aria-label="France"><svg class="i28"><use href="#france"/></svg></button>
    <button class="tool" aria-label="Régions"><svg class="i28"><use href="#francelite"/></svg></button>
    <button class="tool" aria-label="Panneau"><svg class="i28"><use href="#signpost"/></svg></button>
  </div>
  <div class="zoomer ms-auto me-2"><input type="range" min="0" max="3" value="0" aria-label="Zoom"><div class="ticks"><i></i><i></i><i></i><i></i></div></div>
</div>

<main class="workspace flex-fill"></main>

<footer class="statusbar"><div class="status-text"><span>Vous êtes DEV (DEVELOPPEUR ITEM), groupe 'Superviseur'.</span><span>Société : TRANSPORTS GUIVARC'H, Agence : TRANSPORTS GUIVARC'H, avec les droits &lt;Superviseur général&gt;</span><span>Fichier ini : C:\Program Files (x86)\ITEM\item.ini</span></div></footer>

<div class="taskbar d-flex">
  <button class="task" aria-label="Démarrer"><svg width="16" height="16" viewBox="0 0 16 16"><path d="M0 2.500L7 1.500V7.500H0zM8 1.300L16 0v7.500H8zM0 8.500h7v6L0 13.500zM8 8.500h8V16l-8-1.300z" fill="#fff"/></svg></button>
  <button class="task" aria-label="Rechercher"><svg width="18" height="18" viewBox="0 0 18 18"><circle cx="11" cy="7" r="5" fill="none" stroke="#fff" stroke-width="1.500"/><path d="M7.500 10.500L2 16" stroke="#fff" stroke-width="1.500"/></svg></button>
  <button class="task" aria-label="Vue des tâches"><svg width="18" height="18" viewBox="0 0 18 18"><path d="M1.500 2v2.500h10V2M1.500 16v-2.500h10V16M1.500 7h10v4.500h-10zM15.500 2v4M15.500 10v6" fill="none" stroke="#fff"/><path d="M14 6h3v3h-3z" fill="#fff"/></svg></button>
  <button class="task" aria-label="Internet Explorer"><svg class="i24" viewBox="0 0 24 24"><path d="M20 16c-3 7-14 6-14-3C6 3 21 3 21 13H9" fill="none" stroke="#44b4ee" stroke-width="4"/><path d="M3 23c-5-5 6-20 18-22 3 0 3 3 1 6 0-6-7-3-12 2-5 4-9 10-7 14z" fill="#f3c243"/></svg></button>
  <button class="task" aria-label="Explorateur"><svg class="i22" viewBox="0 0 22 22"><path d="M0 2h8l2 2h12v15H0z" fill="#e9b84b"/><path d="M0 5h22v15H0z" fill="#fbe29a"/><path d="M4 21v-7l3-2h8l3 2v7h-4v-4H8v4z" fill="#3a9bdc"/></svg></button>
  <button class="task" aria-label="Services"><svg class="i24" viewBox="0 0 24 24"><circle cx="9" cy="9" r="6" fill="none" stroke="#d5e0ee" stroke-width="3"/><circle cx="9" cy="9" r="8" fill="none" stroke="#b4c4d8" stroke-width="2" stroke-dasharray="2.500 2"/><circle cx="18.500" cy="18.500" r="3" fill="none" stroke="#cdd9e8" stroke-width="2"/><circle cx="18.500" cy="18.500" r="4.500" fill="none" stroke="#cdd9e8" stroke-dasharray="1.500 1.500"/></svg></button>
  <button class="task running" aria-label="Configuration"><svg class="i24" viewBox="0 0 24 24"><path d="M2 4l14-3 4 2v16L6 23l-4-3z" fill="#d2d2d2"/><path d="M2 4l4 2v17l-4-3z" fill="#8b8b8b"/><path d="M8 7l9-2M8 10l9-2" stroke="#777" stroke-width="1.500"/><circle cx="17" cy="15" r="5" fill="#888" stroke="#eee" stroke-width="3" stroke-dasharray="3 1.500"/><circle cx="17" cy="15" r="2" fill="#ddd"/></svg></button>
  <button class="task running" aria-label="Antenne"><svg class="i24" viewBox="0 0 24 24"><path d="M1 12C1 7 4 3 9 1M4 12c0-5 2-7 6-9" stroke="#5b8a59" fill="none"/><circle cx="15" cy="12" r="7.500" fill="#e8e8e8"/><path d="M9 9c0 6 5 9 10 9" stroke="#a2a2a2" fill="none"/><circle cx="14" cy="13" r="1.500" fill="#999"/><path d="M15 20h5l2 3H13z" fill="#cfcfcf"/></svg></button>
  <button class="task" aria-label="Panneau de contrôle"><svg class="i22" viewBox="0 0 22 22"><path d="M0 3h22v16H0z" fill="#4aa8e0"/><path d="M2 5h18v12H2z" fill="#8fd3f5"/><circle cx="7" cy="10" r="3.500" fill="#1e68ad"/><path d="M7 10V6a4 4 0 0 1 4 4z" fill="#fff"/><path d="M13 10h5M4 15h6M13 14h5" stroke="#3c8acb" stroke-width="1.500"/><path d="M13 9V7M16 9V5" stroke="#1e68ad" stroke-width="1.500"/></svg></button>
  <button class="task" aria-label="Gestionnaire de serveur"><svg class="i24" viewBox="0 0 24 24"><path d="M1 0h11v24H1z" fill="#3ba4e6"/><path d="M3 3h7M3 6h7M3 18h2" stroke="#0d5791" stroke-width="1.500"/><path d="M5 13h19v11H5z" fill="#8497b7" stroke="#dfe6f1" stroke-width=".8"/><path d="M11 13v-3h7v3M5 18h19" stroke="#cfd9ea" fill="none" stroke-width="1.500"/></svg></button>
  <button class="task running" aria-label="Item"><svg class="i24" viewBox="0 0 24 24"><path d="M0 0h24v24H0z" fill="#fff"/><text x="11" y="13" font-size="10" text-anchor="middle" font-family="DejaVu Sans Condensed">item</text><path d="M11 19l3-3 2 1-2 4-2-2" stroke="#aaa" fill="none"/></svg></button>
  <button class="task running" aria-label="Assistance ITEM"><svg class="i24"><use href="#assist"/></svg></button>
  <button class="task running focused" aria-label="Item Base commune"><svg class="i24" viewBox="0 0 24 24"><path d="M0 9l7-1 4 3 5-2 7 7-13 5-7 1z" fill="#dedede"/><path d="M11 11l-1 10" stroke="#777"/><path d="M9 22l13-5" stroke="#c49a6a"/><path d="M22 1l1 3-9 11-4 3 2-5z" fill="#9fb4cd"/><path d="M22 2l-10 13" stroke="#26384f" stroke-width="1.500"/></svg></button>

  <div class="tray ms-auto d-flex align-items-center gap-2">
    <button class="tray-btn" aria-label="Icônes cachées"><svg width="14" height="10"><path d="M1 8l6-6 6 6" stroke="#fff" fill="none" stroke-width="1.500"/></svg></button>
    <button class="tray-btn" aria-label="Réseau"><svg width="18" height="16"><path d="M5 2.500h11.500v8H5M10.500 11v2.500M6 13.500h8M1.500 1.500h4v4h-4zM3.500 6v7" stroke="#fff" fill="none"/></svg></button>
    <button class="tray-btn" aria-label="Volume coupé"><svg width="18" height="18"><path d="M1.500 6h3L8 2.500v11L4.500 10h-3z" stroke="#fff" fill="none"/><circle cx="12.500" cy="13" r="4.500" fill="#d32f2f"/><path d="M10.500 11l4 4M14.500 11l-4 4" stroke="#fff"/></svg></button>
    <div class="clock text-center"><div>17:47</div><div>29/01/2026</div></div>
    <button class="tray-btn ms-2" aria-label="Notifications"><svg width="26" height="26" viewBox="0 0 26 26"><path d="M1 1h16v12H9l-3 4v-4H1z" fill="#fff"/><path d="M4 4.500h10M4 7.500h10M4 10.500h7" stroke="#111"/><circle cx="17" cy="17" r="8" fill="#26282e" stroke="#999"/><text x="17" y="21" text-anchor="middle" font-size="12" fill="#fff" font-family="Roboto">1</text></svg></button>
    <span class="peek"></span>
  </div>
</div>
</body>
</html>
